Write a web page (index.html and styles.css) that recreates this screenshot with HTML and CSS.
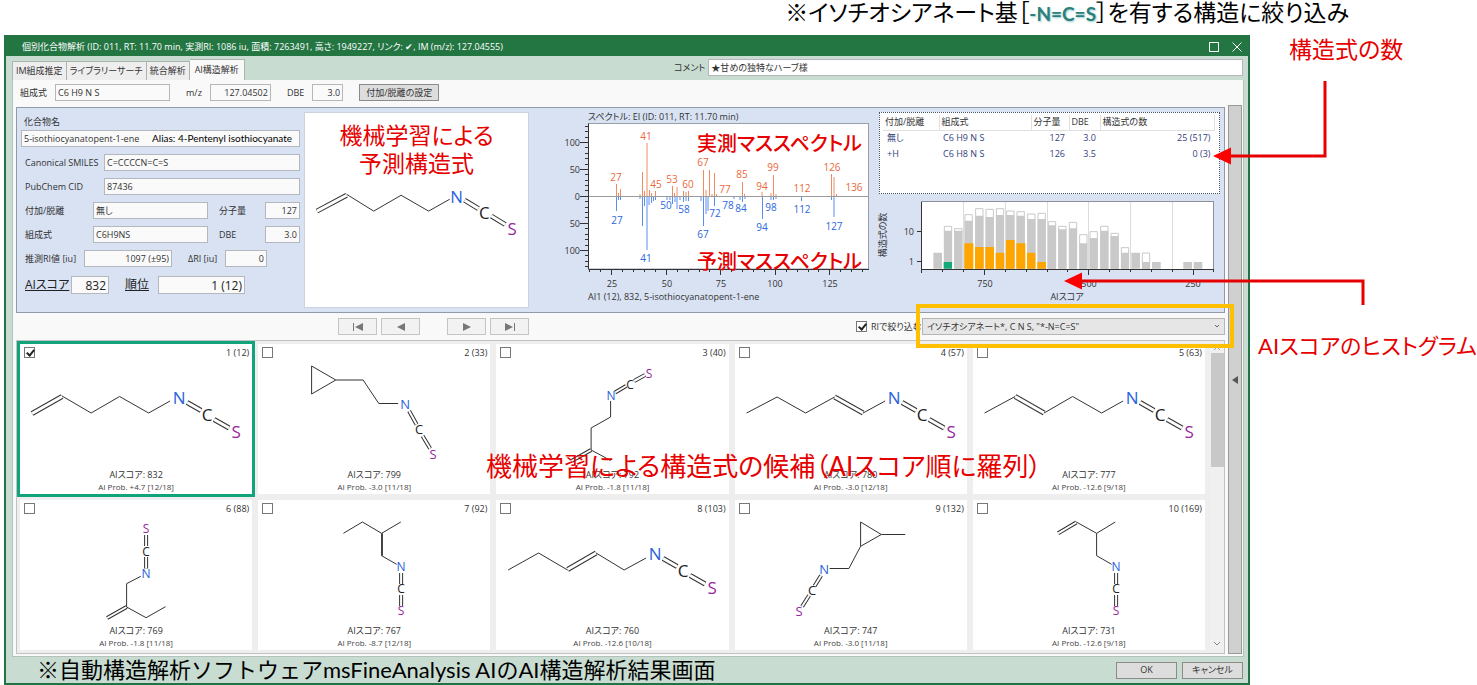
FILE: index.html
```html
<!DOCTYPE html>
<html lang="ja">
<head>
<meta charset="utf-8">
<title>個別化合物解析</title>
<link rel="stylesheet" href="styles.css">
</head>
<body>
<div class="page">
  <p class="headline">※イソチオシアネート基［<b class="group-name">-N=C=S</b>］を有する構造に絞り込み</p>

  <div class="stage">
    <main class="window">
      <header class="titlebar">
        <h1 class="title">個別化合物解析 (ID: 011, RT: 11.70 min, 実測RI: 1086 iu, 面積: 7263491, 高さ: 1949227, リンク: ✔, IM (m/z): 127.04555)</h1>
        <button class="win-btn" aria-label="最大化"><svg width="10" height="10" viewBox="0 0 10 10"><path d="M.5 .5h9v9h-9z" fill="none" stroke="#fff"/></svg></button>
        <button class="win-btn" aria-label="閉じる"><svg width="10" height="10" viewBox="0 0 10 10"><path d="M.5 .5l9 9M9.5 .5l-9 9" fill="none" stroke="#fff"/></svg></button>
      </header>

      <div class="tabstrip">
        <nav class="tabs">
          <button class="tab">IM組成推定</button>
          <button class="tab">ライブラリーサーチ</button>
          <button class="tab">統合解析</button>
          <button class="tab tab-active">AI構造解析</button>
        </nav>
        <div class="comment">
          <label for="comment">コメント</label>
          <input id="comment" class="field" value="★甘めの独特なハーブ様">
        </div>
      </div>

      <div class="pane">
        <div class="toolbar">
          <label for="formula">組成式</label>
          <input id="formula" class="field w-formula" value="C6 H9 N S">
          <label for="mz" class="lead">m/z</label>
          <input id="mz" class="field num w-mz" value="127.04502">
          <label for="dbe" class="lead">DBE</label>
          <input id="dbe" class="field num w-dbe" value="3.0">
          <button class="btn btn-setup">付加/脱離の設定</button>
        </div>

        <div class="workspace">
          <div class="content">
            <section class="detail">
              <form class="compound">
                <label for="name" class="name-label">化合物名</label>
                <div class="row name-row">
                  <input id="name" class="field grow" value="5-isothiocyanatopent-1-ene">
                  <span class="alias">Alias: 4-Pentenyl isothiocyanate</span>
                </div>
                <div class="row"><label for="smiles" class="l-wide">Canonical SMILES</label><input id="smiles" class="field grow" value="C=CCCCN=C=S"></div>
                <div class="row"><label for="cid" class="l-wide">PubChem CID</label><input id="cid" class="field grow" value="87436"></div>
                <div class="row"><label for="adduct" class="l-mid">付加/脱離</label><input id="adduct" class="field grow" value="無し"><label for="mw" class="l-unit">分子量</label><input id="mw" class="field num w-unit" value="127"></div>
                <div class="row"><label for="formula2" class="l-mid">組成式</label><input id="formula2" class="field grow" value="C6H9NS"><label for="dbe2" class="l-unit">DBE</label><input id="dbe2" class="field num w-unit" value="3.0"></div>
                <div class="row row-ri"><label for="ri" class="l-ri">推測RI値 [iu]</label><input id="ri" class="field num grow" value="1097 (±95)"><label for="dri" class="l-dri">ΔRI [iu]</label><input id="dri" class="field num w-dri" value="0"></div>
                <div class="row row-score"><label for="score" class="l-score">AIスコア</label><input id="score" class="field num w-score" value="832"><label for="rank" class="l-rank">順位</label><input id="rank" class="field num grow" value="1 (12)"></div>
              </form>

              <figure class="structure">
                <figcaption class="note note-structure">機械学習による<br>予測構造式</figcaption>
                <svg class="mol-main" viewBox="0 -2 225 194" role="img" aria-label="C=CCCCN=C=S">
                  <path class="dbl" d="M12 97L42 81M161 86L175 94.500M188 102L202 110.500"/>
                  <path class="gap" d="M12 97L42 81M161 86L175 94.500M188 102L202 110.500"/>
                  <path class="bond" d="M42 80L69.300 97L97 81L124.700 97L146 85"/>
                  <g class="atoms big"><text class="n" x="153" y="89">N</text><text class="c" x="181" y="105">C</text><text class="s" x="209" y="121">S</text></g>
                </svg>
              </figure>

              <figure class="spectrum">
                <svg viewBox="533 112 338 196" role="img" aria-label="マススペクトル">
                  <text class="txt" x="588" y="120">スペクトル: EI (ID: 011, RT: 11.70 min)</text>
                  <rect x="588.500" y="123.500" width="280" height="145.500" fill="#fff" stroke="#999ea8"/>
                  <path class="tick" d="M588.500 123.500V269M580 142.500h8M580 169.500h8M580 196.500h8M580 223.500h8M580 250.500h8"/>
                  <path class="tick" d="M585 126.500h3M585 131.500h3M585 137.500h3M585 147.500h3M585 153.500h3M585 158.500h3M585 164.500h3M585 174.500h3M585 180.500h3M585 185.500h3M585 190.500h3M585 201.500h3M585 207.500h3M585 212.500h3M585 217.500h3M585 228.500h3M585 234.500h3M585 239.500h3M585 245.500h3M585 255.500h3M585 261.500h3M585 266.500h3"/>
                  <path class="tick" d="M588.500 269.500H869M611.500 269v6M666.500 269v6M720.500 269v6M775.500 269v6M829.500 269v6M589.500 269v3M600.500 269v3M622.500 269v3M633.500 269v3M644.500 269v3M655.500 269v3M677.500 269v3M688.500 269v3M699.500 269v3M709.500 269v3M731.500 269v3M742.500 269v3M753.500 269v3M764.500 269v3M786.500 269v3M797.500 269v3M808.500 269v3M818.500 269v3M840.500 269v3M851.500 269v3M862.500 269v3"/>
                  <path d="M589 196.500H868" stroke="#9b9b9b" fill="none"/>
                  <path class="measured" d="M616.500 196V184M618.500 196v-3M620.500 196v-7M640 196v-2M642.500 196V172M644.500 196v-5M647 196V143M649.500 196v-6M651.500 196v-3M655.500 196v-5M672.500 196v-10M674.500 196v-3M677 196v-9M683.500 196v-5M686 196v-4M688.500 196v-5M703.500 196V170M706 196v-6M709.500 196V170M712 196v-2M714.500 196V173M716.500 196v-2M742.500 196V182M744.500 196v-2M762 196v-4M771 196v-3M773.500 196V175M776 196v-2M831.500 196V174M834 196V177M836.500 196v-2"/>
                  <path class="predicted" d="M616.500 197v14M618.500 197v3M620.500 197v3M640 197v2M642.500 197v29M644.500 197v9M647 197v53M649 197v8M651.500 197v6M653.500 197v4M655.500 197v3M667 197v3M670 197v3M672.500 197v7M675 197v5M677 197v12M680 197v3M683.500 197v5M686 197v4M688.500 197v4M701 197v4M703.500 197v29M706 197v17M708 197v14M714.500 197v9M734 197v2M740 197v3M742.500 197v5M745 197v2M762.500 197v22M771 197v3M773.500 197v3M776 197v2M801.500 197v4M831.500 197v3M834 197v20"/>
                  <g class="txt end"><text x="580" y="146">100</text><text x="580" y="173">50</text><text x="580" y="200">0</text><text x="580" y="227">50</text><text x="580" y="254">100</text></g>
                  <g class="txt mid"><text x="612" y="287">25</text><text x="667" y="287">50</text><text x="721" y="287">75</text><text x="775" y="287">100</text><text x="830" y="287">125</text></g>
                  <g class="peak up"><text x="616" y="181">27</text><text x="646" y="140">41</text><text x="656" y="188">45</text><text x="672" y="183">53</text><text x="688" y="188">60</text><text x="703" y="166">67</text><text x="725" y="193">77</text><text x="742" y="178">85</text><text x="762" y="190">94</text><text x="773" y="171">99</text><text x="802" y="192">112</text><text x="832" y="171">126</text><text x="854" y="191">136</text></g>
                  <g class="peak down"><text x="617" y="224">27</text><text x="646" y="262">41</text><text x="666" y="209">50</text><text x="684" y="213">58</text><text x="703" y="238">67</text><text x="715" y="217">72</text><text x="728" y="209">78</text><text x="741" y="212">84</text><text x="762" y="231">94</text><text x="771" y="211">98</text><text x="802" y="213">112</text><text x="834" y="230">127</text></g>
                  <text class="txt" x="588" y="300">AI1 (12), 832, 5-isothiocyanatopent-1-ene</text>
                </svg>
                <span class="note note-measured">実測マススペクトル</span>
                <span class="note note-predicted">予測マススペクトル</span>
              </figure>

              <div class="stats">
                <div class="table-box">
                  <table class="counts">
                    <colgroup><col class="c1"><col class="c2"><col class="c3"><col class="c4"><col></colgroup>
                    <thead><tr><th>付加/脱離</th><th>組成式</th><th>分子量</th><th>DBE</th><th>構造式の数</th></tr></thead>
                    <tbody>
                      <tr><td>無し</td><td>C6 H9 N S</td><td class="r">127</td><td class="r">3.0</td><td class="r last">25 (517)</td></tr>
                      <tr><td>+H</td><td>C6 H8 N S</td><td class="r">126</td><td class="r">3.5</td><td class="r last">0 (3)</td></tr>
                    </tbody>
                  </table>
                </div>
                <svg class="histogram" viewBox="875 198 345 110" role="img" aria-label="AIスコアのヒストグラム">
                  <rect x="921.500" y="201.500" width="292" height="68" fill="#fff" stroke="#8c919b"/>
                  <path d="M963.500 202v67M1005.500 202v67M1047.500 202v67M1088.500 202v67M1130.500 202v67M1172.500 202v67" stroke="#dcdcdc" fill="none"/>
                  <g transform="translate(870 100) scale(.333333)">
                    <path fill="#fff" stroke="#c9c9c9" stroke-width="3" d="M223 505V379h22V505zM254 505V386h22V505zM285 505V344h22V505zM317 505V326h22V505zM348 505V328h22V505zM379 505V326h22V505zM410 505V333h22V505zM441 505V335h22V505zM473 505V342h22V505zM504 505V340h22V505zM535 505V365h22V505zM566 505V379h22V505zM598 505V367h22V505zM629 505V404h22V505zM660 505V395h22V505zM692 505V379h22V505zM723 505V400h22V505zM754 505V443h22V505zM817 505V459h22V505z"/>
                    <path fill="#c9c9c9" d="M190 506V458h26V506zM222 506V392h24V506zM253 506V392h24V506zM284 506V362h24V506zM316 506V347h24V506zM347 506V351h24V506zM378 506V345h24V506zM409 506V345h24V506zM440 506V347h24V506zM472 506V357h24V506zM503 506V357h24V506zM534 506V376h24V506zM565 506V388h24V506zM597 506V385h24V506zM628 506V430h24V506zM659 506V414h24V506zM691 506V392h24V506zM722 506V408h24V506zM753 506V458h24V506zM784 506V458h26V506zM816 506V486h24V506zM846 506V486h26V506zM940 506V486h26V506zM971 506V486h26V506z"/>
                    <path fill="#ffa500" d="M283 506V430h27V506zM315 506V441h26V506zM346 506V441h26V506zM377 506V458h26V506zM408 506V420h26V506zM439 506V430h27V506zM471 506V458h25V506zM502 506V486h26V506z"/>
                    <path fill="#11a97c" d="M221 506V486h25V506z"/>
                  </g>
                  <path class="tick" d="M921.500 202V273M921 269.500H1214M917 231.500h4M917 261.500h4M984.500 269v6M1088.500 269v6M1193.500 269v6M942.500 269v3M963.500 269v3M1005.500 269v3M1026.500 269v3M1047.500 269v3M1067.500 269v3M1109.500 269v3M1130.500 269v3M1151.500 269v3M1172.500 269v3M1213.500 269v3"/>
                  <g class="txt end"><text x="914" y="235">10</text><text x="914" y="265">1</text></g>
                  <g class="txt mid"><text x="985" y="287">750</text><text x="1089" y="287">500</text><text x="1193" y="287">250</text><text x="1067" y="300">AIスコア</text><text transform="translate(886 235) rotate(-90)">構造式の数</text></g>
                </svg>
              </div>
            </section>

            <div class="navbar">
              <div class="pager">
                <button class="btn pg" aria-label="最初"><svg width="12" height="8" viewBox="0 0 12 8"><path d="M1 0h1v8H1zM11 0v8L3 4z"/></svg></button>
                <button class="btn pg" aria-label="前"><svg width="12" height="8" viewBox="0 0 12 8"><path d="M10 0v8L2 4z"/></svg></button>
                <button class="btn pg pg-next" aria-label="次"><svg width="12" height="8" viewBox="0 0 12 8"><path d="M2 0v8L10 4z"/></svg></button>
                <button class="btn pg" aria-label="最後"><svg width="12" height="8" viewBox="0 0 12 8"><path d="M1 0v8L9 4zM10 0h1v8h-1z"/></svg></button>
              </div>
              <label class="ri-filter"><input type="checkbox" class="check" checked>RIで絞り込む</label>
              <div class="filter">
                <select class="select" aria-label="部分構造"><option>イソチオシアネート*, C N S, "*-N=C=S"</option></select>
              </div>
            </div>

            <section class="results">
              <div class="cards">
                <article class="card card-selected">
                  <div class="card-head"><input type="checkbox" class="check" aria-label="候補1" checked><span>1 (12)</span></div>
                  <svg class="mol" viewBox="0 18 232 104">
                    <path class="dbl" d="M12 69.500L42 52.500"/><path class="gap" d="M12 69.500L42 52.500"/>
                    <path class="bond" d="M42 52L71 69L99.500 52.500L128.500 69L150 57"/>
                    <g id="tail-wide">
                      <path class="dbl" d="M167 58.500L181 66.500M194 75.500L209 84"/><path class="gap" d="M167 58.500L181 66.500M194 75.500L209 84"/>
                      <g class="atoms big"><text class="n" x="159" y="60">N</text><text class="c" x="187" y="77">C</text><text class="s" x="216" y="94">S</text></g>
                    </g>
                  </svg>
                  <p class="score">AIスコア: 832</p><p class="prob">AI Prob. +4.7 [12/18]</p>
                </article>
                <article class="card">
                  <div class="card-head"><input type="checkbox" class="check" aria-label="候補2"><span>2 (33)</span></div>
                  <svg class="mol" viewBox="0 18 232 104">
                    <path class="bond" d="M77.700 36L53.500 22V50L77.700 36H105L120.700 59.500H140"/>
                    <path class="dbl thin" d="M151 67L158.500 80.500M164.500 92L172 104.500"/><path class="gap thin" d="M151 67L158.500 80.500M164.500 92L172 104.500"/>
                    <g class="atoms"><text class="n" x="147" y="65">N</text><text class="c" x="161" y="90">C</text><text class="s" x="175" y="115">S</text></g>
                  </svg>
                  <p class="score">AIスコア: 799</p><p class="prob">AI Prob. -3.0 [11/18]</p>
                </article>
                <article class="card">
                  <div class="card-head"><input type="checkbox" class="check" aria-label="候補3"><span>3 (40)</span></div>
                  <svg class="mol" viewBox="0 18 232 104">
                    <path class="dbl thin" d="M138 37L149 31M119 48.500L130 42M95 106L75.500 117"/><path class="gap thin" d="M138 37L149 31M119 48.500L130 42M95 106L75.500 117"/>
                    <path class="bond" d="M114.500 57V73L95 84V106L114.500 116.500"/>
                    <g class="atoms small"><text class="n" x="115" y="56">N</text><text class="c" x="134" y="45">C</text><text class="s" x="153" y="34">S</text></g>
                  </svg>
                  <p class="score">AIスコア: 792</p><p class="prob">AI Prob. -1.8 [11/18]</p>
                </article>
                <article class="card">
                  <div class="card-head"><input type="checkbox" class="check" aria-label="候補4"><span>4 (57)</span></div>
                  <svg class="mol" viewBox="0 18 232 104">
                    <path class="dbl" d="M99.500 53L128 69"/><path class="gap" d="M99.500 53L128 69"/>
                    <path class="bond" d="M11.500 69L42 53L70.500 69L99.500 53M128 69L150 57"/>
                    <use href="#tail-wide"/>
                  </svg>
                  <p class="score">AIスコア: 780</p><p class="prob">AI Prob. -3.0 [12/18]</p>
                </article>
                <article class="card">
                  <div class="card-head"><input type="checkbox" class="check" aria-label="候補5"><span>5 (63)</span></div>
                  <svg class="mol" viewBox="0 18 232 104">
                    <path class="dbl" d="M42 52.500L71 69"/><path class="gap" d="M42 52.500L71 69"/>
                    <path class="bond" d="M11.500 69L42 52.500M71 69L99.500 52.500L128.500 69L150 57"/>
                    <use href="#tail-wide"/>
                  </svg>
                  <p class="score">AIスコア: 777</p><p class="prob">AI Prob. -12.6 [9/18]</p>
                </article>
                <article class="card">
                  <div class="card-head"><input type="checkbox" class="check" aria-label="候補6"><span>6 (88)</span></div>
                  <svg class="mol" viewBox="0 18 232 104">
                    <path class="dbl thin" d="M126 35V46M126 57V68.500M106.500 107L87 118"/><path class="gap thin" d="M126 35V46M126 57V68.500M106.500 107L87 118"/>
                    <path class="bond" d="M120.700 76.300L106.500 83.700V107L126 117.700L145.400 106.700"/>
                    <g class="atoms small"><text class="s" x="126" y="33">S</text><text class="c" x="126" y="56">C</text><text class="n" x="126" y="78">N</text></g>
                  </svg>
                  <p class="score">AIスコア: 769</p><p class="prob">AI Prob. -1.8 [11/18]</p>
                </article>
                <article class="card">
                  <div class="card-head"><input type="checkbox" class="check" aria-label="候補7"><span>7 (92)</span></div>
                  <svg class="mol" viewBox="0 18 232 104">
                    <path class="bond" d="M85.300 33.300L104.300 22L123.500 33.300L142.700 22M123.500 33.300V55.700L138.500 64.300"/>
                    <path class="bond" d="M124.300 33.300V55.700"/>
                    <g id="tail-down">
                      <path class="dbl thin" d="M143 73V84M143 95V106"/><path class="gap thin" d="M143 73V84M143 95V106"/>
                      <g class="atoms small"><text class="n" x="143" y="71">N</text><text class="c" x="143" y="93">C</text><text class="s" x="143" y="115">S</text></g>
                    </g>
                  </svg>
                  <p class="score">AIスコア: 767</p><p class="prob">AI Prob. -8.7 [12/18]</p>
                </article>
                <article class="card">
                  <div class="card-head"><input type="checkbox" class="check" aria-label="候補8"><span>8 (103)</span></div>
                  <svg class="mol" viewBox="0 18 232 104">
                    <path class="dbl" d="M71.500 69.500L100 53"/><path class="gap" d="M71.500 69.500L100 53"/>
                    <path class="bond" d="M12 70L42.500 53L71.500 70M100 53L128 70L150 58"/>
                    <use href="#tail-wide"/>
                  </svg>
                  <p class="score">AIスコア: 760</p><p class="prob">AI Prob. -12.6 [10/18]</p>
                </article>
                <article class="card">
                  <div class="card-head"><input type="checkbox" class="check" aria-label="候補9"><span>9 (132)</span></div>
                  <svg class="mol" viewBox="0 18 232 104">
                    <path class="bond" d="M170.200 34.500H146.200L125.500 22V46.300L146.200 34.500M125.500 46.300L113.800 68.500H94.500"/>
                    <path class="dbl thin" d="M86 75.500L79.500 86M74 95.500L67 106.500"/><path class="gap thin" d="M86 75.500L79.500 86M74 95.500L67 106.500"/>
                    <g class="atoms"><text class="n" x="89" y="74">N</text><text class="c" x="77" y="95">C</text><text class="s" x="64" y="116">S</text></g>
                  </svg>
                  <p class="score">AIスコア: 747</p><p class="prob">AI Prob. -3.0 [11/18]</p>
                </article>
                <article class="card">
                  <div class="card-head"><input type="checkbox" class="check" aria-label="候補10"><span>10 (169)</span></div>
                  <svg class="mol" viewBox="0 18 232 104">
                    <path class="dbl thin" d="M85 33.300L103.200 22.500"/><path class="gap thin" d="M85 33.300L103.200 22.500"/>
                    <path class="bond" d="M103.200 22L123.500 33.300L142.200 22M123.500 33.300V55.700L138.500 64.300"/>
                    <use href="#tail-down"/>
                  </svg>
                  <p class="score">AIスコア: 731</p><p class="prob">AI Prob. -12.6 [9/18]</p>
                </article>
              </div>
              <div class="scrollbar">
                <svg width="6" height="4" viewBox="0 0 6 4"><path d="M0 4L3 1L6 4" fill="none" stroke="#999"/></svg>
                <div class="thumb"></div>
                <svg width="6" height="4" viewBox="0 0 6 4"><path d="M0 0L3 3L6 0" fill="none" stroke="#888"/></svg>
              </div>
              <span class="note note-candidates">機械学習による構造式の候補（AIスコア順に羅列）</span>
            </section>
          </div>
          <button class="handle" aria-label="パネルを開く"><svg width="6" height="8" viewBox="0 0 6 8"><path d="M6 0v8L0 4z" fill="#555"/></svg></button>
        </div>
      </div>

      <footer class="footer">
        <p class="caption">※自動構造解析ソフトウェアmsFineAnalysis AIのAI構造解析結果画面</p>
        <button class="btn btn-dialog">OK</button>
        <button class="btn btn-dialog">キャンセル</button>
      </footer>
    </main>

    <aside class="callouts">
      <p class="callout callout-count">構造式の数</p>
      <p class="callout callout-hist">AIスコアのヒストグラム</p>
      <svg class="arrows" width="310" height="250" viewBox="0 0 310 250" aria-hidden="true">
        <path d="M156 46V121H60M194 270V246H-90" fill="none" stroke="#e60000" stroke-width="3"/>
        <path d="M44 121L62 112.500V129.500zM-105 246L-87 237.500V254.500z" fill="#f00"/>
      </svg>
    </aside>
  </div>
</div>
</body>
</html>
```

FILE: styles.css
```css
* { box-sizing: border-box; }

body {
  margin: 0;
  background: #fff;
  color: #333;
  font: 9px/12px "Open Sans", "Noto Sans CJK JP", sans-serif;
  font-feature-settings: "palt";
}

p, h1, figure { margin: 0; }

button, input, select {
  font: inherit;
  font-feature-settings: inherit;
  color: inherit;
}

.page {
  display: flex;
  flex-direction: column;
  min-height: 100vh;
}

.headline,
.caption,
.callout,
.note {
  font-family: Lato, "Noto Sans CJK JP", sans-serif;
  white-space: nowrap;
}

.headline {
  height: 35px;
  padding-right: 128px;
  text-align: right;
  color: #000;
  font-size: 23px;
  line-height: 24px;
}

.group-name {
  color: #2c7f7a;
  font-size: 19px;
  text-shadow: 1px 1px 2px #9cc;
}

.stage {
  display: flex;
  flex: 1;
  padding-left: 4px;
}

/* Application window */
.window {
  display: flex;
  flex: 1;
  flex-direction: column;
  min-width: 0;
  border: 2px solid #217346;
  border-top: 0;
  background: #c8dcd1;
}

.titlebar {
  display: flex;
  align-items: center;
  gap: 13px;
  height: 21px;
  padding: 2px 6px 0 16px;
  background: #237542;
}

.title {
  flex: 1;
  color: #fff;
  font-size: 9px;
  font-weight: 400;
  line-height: 14px;
  white-space: nowrap;
}

.win-btn {
  display: flex;
  padding: 0;
  border: 0;
  background: none;
}

.tabstrip {
  display: flex;
  justify-content: space-between;
  height: 24px;
  padding: 3px 5px 0 6px;
}

.tabs { display: flex; align-items: flex-end; }

.tab {
  height: 19px;
  padding: 0 3px;
  border: 1px solid #acb4ae;
  border-width: 1px 1px 0 0;
  background: #eee;
  white-space: nowrap;
}

.tab:first-child { border-left-width: 1px; }

.tab-active {
  height: 21px;
  padding: 0 5px;
  background: #f9f9f9;
}

.comment {
  display: flex;
  align-items: flex-start;
  gap: 3px;
  width: 569px;
  line-height: 17px;
}

.comment .field { flex: 1; background: #fff; }

.field {
  min-width: 0;
  height: 17px;
  padding: 0 2px;
  border: 1px solid #b4b7bb;
  background: #fafafa;
}

.num { text-align: right; }
.grow { flex: 1; }

.pane {
  display: flex;
  flex: 1;
  flex-direction: column;
  margin: 0 4px 0 6px;
  padding: 4px 1px 2px 3px;
  border: 1px solid #b3c2ba;
  border-width: 0 1px 1px;
  background: #f9f9f9;
}

.toolbar {
  display: flex;
  align-items: center;
  padding-left: 4px;
}

.toolbar .field { margin-left: 8px; }
.w-formula { width: 115px; }
.w-mz { width: 61px; }
.w-dbe { width: 31px; }
.lead { padding-left: 16px; }

.btn {
  display: flex;
  align-items: center;
  justify-content: center;
  height: 17px;
  padding: 0;
  border: 1px solid #8b8b8b;
  background: #ddd;
}

.btn-setup { width: 80px; margin-left: 16px; }

.workspace {
  display: flex;
  flex: 1;
  gap: 3px;
  padding-top: 4px;
}

.content {
  display: flex;
  flex: 1;
  flex-direction: column;
  min-width: 0;
}

.handle {
  display: flex;
  align-items: center;
  justify-content: center;
  width: 14px;
  padding: 0;
  border: 1px solid #999;
  background: #d0d0d0;
}

/* Compound detail */
.detail {
  display: grid;
  grid-template-columns: minmax(0, 279fr) minmax(0, 225fr) minmax(0, 338fr) minmax(0, 345fr);
  gap: 4px;
  margin-top: 2px;
  padding: 4px;
  border: 1px solid #929aa9;
  background: #d9e2f3;
}

.compound {
  display: flex;
  flex-direction: column;
  gap: 7px;
}

.name-label { line-height: 10px; padding-left: 3px; padding-top: 5px; }
.row { display: flex; align-items: center; }
.row label { flex: none; padding-left: 4px; white-space: nowrap; }
.row .grow { width: 0; }
.name-row { position: relative; margin-top: -4px; }

.alias {
  position: absolute;
  right: 8px;
  color: #000;
  font: 10px/15px Lato, sans-serif;
}

.l-wide { width: 83px; }
.l-mid { width: 72px; }
.row .l-unit { width: 57px; padding-left: 11px; }
.w-unit { width: 35px; }
.row-ri { padding-right: 33px; }
.l-ri { width: 63px; }
.row .l-dri { width: 53px; padding-left: 16px; }
.w-dri { width: 42px; }
.row-score { padding-top: 2px; padding-right: 55px; color: #222; font-size: 12px; }
.row-score label { text-decoration: underline; }
.l-score { width: 50px; }
.row .l-rank { width: 49px; padding-left: 16px; }
.w-score { width: 38px; }
.row-score .field { height: 18px; }

.structure {
  position: relative;
  border: 1px solid #ccd3df;
  background: #fff;
}

.mol-main { display: block; width: 100%; }

.bond, .dbl, .gap { fill: none; stroke: #333; stroke-width: 1; }
.dbl { stroke-width: 5; }
.gap { stroke: #fff; stroke-width: 3; }
.dbl.thin { stroke-width: 4; }
.gap.thin { stroke-width: 2; }

.atoms { font-family: "Open Sans", sans-serif; font-size: 13px; text-anchor: middle; }
.atoms.small { font-size: 12px; }
.atoms.big { font-size: 17px; }
.n { fill: #2a63e0; }
.c { fill: #222; }
.s { fill: #97259c; }

.note {
  position: absolute;
  color: #e60000;
}

.note-structure {
  top: 8px;
  left: 0;
  right: 0;
  text-align: center;
  font-size: 23px;
  line-height: 28px;
}

.spectrum { position: relative; }
.spectrum svg, .histogram { display: block; width: 100%; }
.note-measured, .note-predicted { right: 9px; font-size: 20px; line-height: 24px; font-weight: 500; }
.note-measured { top: 19px; }
.note-predicted { top: 137px; }

.txt { fill: #333; font-size: 9px; }
.mid, .peak { text-anchor: middle; }
.end { text-anchor: end; }
.tick { fill: none; stroke: #333; }
.peak { font-size: 10px; }
.up { fill: #e8693a; }
.down { fill: #2b67dd; }
.measured { fill: none; stroke: #f08a62; stroke-width: 1; }
.predicted { fill: none; stroke: #5b8def; stroke-width: 1; }

.stats { display: flex; flex-direction: column; gap: 4px; }

.table-box {
  flex: 1;
  margin-left: 4px;
  padding: 2px 4px 0 3px;
  border: 1px dotted #456;
  background: #fff;
}

.counts { width: 100%; border-collapse: collapse; table-layout: fixed; }
.c1 { width: 56px; }
.c2 { width: 92px; }
.c3 { width: 38px; }
.c4 { width: 31px; }

.counts th {
  height: 15px;
  padding: 0 2px;
  border: 1px solid #e0e0e0;
  border-width: 0 1px 1px 0;
  font-weight: 400;
  text-align: left;
  white-space: nowrap;
}

.counts td { height: 16px; padding: 0 4px; color: #33427c; white-space: nowrap; }
.counts .r { text-align: right; }

/* Pager and filter */
.navbar {
  display: flex;
  align-items: center;
  height: 27px;
  padding-left: 322px;
}

.pager { display: flex; gap: 4px; }
.pg { width: 39px; border-color: #c4c4c4; background: #f2f2f2; fill: #777; }
.pg-next { margin-left: 23px; }

.check {
  position: relative;
  appearance: none;
  flex: none;
  width: 11px;
  height: 11px;
  margin: 0;
  border: 1px solid #777;
  background: #fff;
}

.check:checked::after {
  content: "";
  position: absolute;
  top: 0;
  left: 3px;
  width: 3px;
  height: 6px;
  border: solid #222;
  border-width: 0 2px 2px 0;
  transform: rotate(40deg);
}

.ri-filter {
  display: flex;
  align-items: center;
  gap: 4px;
  width: 64px;
  margin-left: auto;
  white-space: nowrap;
}

.filter { position: relative; width: 303px; margin-left: 2px; }

.filter::after {
  content: "";
  position: absolute;
  z-index: 2;
  inset: -14px -9px -13px -6px;
  border: 4px solid #ffc000;
  pointer-events: none;
}

.select {
  display: block;
  appearance: none;
  width: 100%;
  height: 17px;
  padding: 0 4px;
  border: 1px solid #b5b5b5;
  border-radius: 0;
  background: #e6e6e6 url("data:image/svg+xml,%3Csvg xmlns='http://www.w3.org/2000/svg' width='6' height='4'%3E%3Cpath d='M1 0L3 2L5 0' fill='none' stroke='%23666'/%3E%3C/svg%3E") no-repeat right 4px center;
}

/* Candidates */
.results {
  position: relative;
  display: flex;
  flex: 1;
  gap: 5px;
  padding: 3px 0 3px 3px;
  border: 1px solid #c2c2c2;
  background: #eee;
}

.cards {
  display: grid;
  flex: 1;
  grid-template-columns: repeat(5, 1fr);
  gap: 6px;
}

.card { min-width: 0; background: #fff; text-align: center; }
.card-selected { outline: 3px solid #11a47a; }

.card-head {
  display: flex;
  justify-content: space-between;
  height: 18px;
  padding: 3px 3px 0 4px;
}

.mol { display: block; width: 100%; height: 104px; }
.score { line-height: 13px; padding-top: 2px; }
.prob { font-size: 8px; line-height: 11px; color: #444; }

.scrollbar {
  display: flex;
  flex-direction: column;
  align-items: center;
  width: 14px;
  padding: 2px 0 4px;
  background: #f0f0f0;
}

.thumb { width: 13px; height: 114px; margin: 3px 0 auto; background: #c8c8c8; }

.note-candidates {
  z-index: 1;
  top: 108px;
  left: 469px;
  font-size: 26px;
  line-height: 34px;
}

.footer {
  display: flex;
  align-items: center;
  gap: 5px;
  height: 26px;
  padding: 0 5px 0 31px;
}

.caption {
  flex: 1;
  color: #000;
  font-size: 22px;
  font-feature-settings: normal;
  line-height: 24px;
}

.btn-dialog { width: 61px; }

/* Callouts beside the window */
.callouts {
  position: relative;
  display: flex;
  flex-direction: column;
  gap: 269px;
  width: 227px;
}

.callout {
  color: #e60000;
  font-size: 23px;
  line-height: 28px;
}

.callout-count { padding-left: 39px; }
.callout-hist { padding-left: 8px; font-size: 22px; }

.arrows {
  position: absolute;
  top: 0;
  left: -81px;
  overflow: visible;
  pointer-events: none;
}
```
